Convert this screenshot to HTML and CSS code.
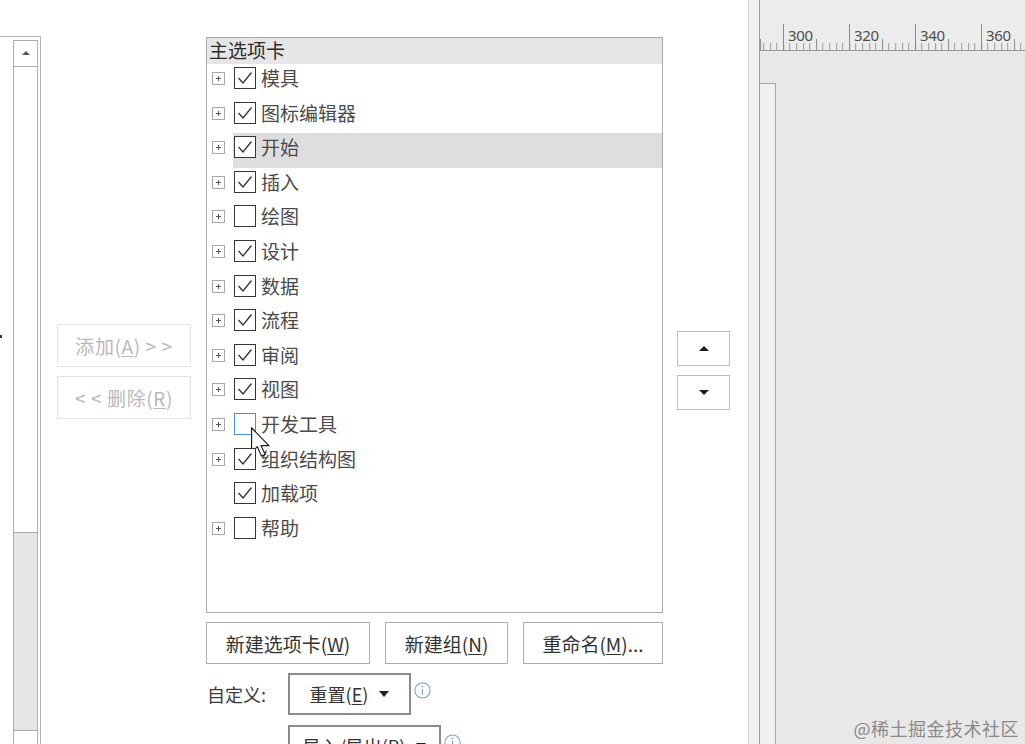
FILE: index.html
```html
<!DOCTYPE html>
<html lang="zh-CN">
<head>
<meta charset="utf-8">
<title>自定义功能区</title>
<link rel="stylesheet" href="styles.css">
</head>
<body>
<div class="screen">
  <div class="dialog">
    <div class="leftbox">
      <div class="lb-gutter"><span class="lb-dot"></span></div>
      <div class="vscroll">
        <div class="sb-up"><span class="tri-up-s"></span></div>
        <div class="sb-thumb"></div>
        <div class="sb-track"></div>
        <div class="sb-down"></div>
      </div>
    </div>

    <div class="midcol">
      <button class="btn-dis">添加(<u>A</u>) &gt; &gt;</button>
      <button class="btn-dis">&lt; &lt; 删除(<u>R</u>)</button>
    </div>

    <div class="treecol">
      <div class="tree">
        <div class="tree-head">主选项卡</div>
        <div class="row"><span class="exp"></span><div class="item"><span class="cb on"><svg viewBox="0 0 20 20"><polyline points="3.5,10 8,15 16.5,4.5"/></svg></span><span class="label">模具</span></div></div>
        <div class="row"><span class="exp"></span><div class="item"><span class="cb on"><svg viewBox="0 0 20 20"><polyline points="3.5,10 8,15 16.5,4.5"/></svg></span><span class="label">图标编辑器</span></div></div>
        <div class="row sel"><span class="exp"></span><div class="item"><span class="cb on"><svg viewBox="0 0 20 20"><polyline points="3.5,10 8,15 16.5,4.5"/></svg></span><span class="label">开始</span></div></div>
        <div class="row"><span class="exp"></span><div class="item"><span class="cb on"><svg viewBox="0 0 20 20"><polyline points="3.5,10 8,15 16.5,4.5"/></svg></span><span class="label">插入</span></div></div>
        <div class="row"><span class="exp"></span><div class="item"><span class="cb"></span><span class="label">绘图</span></div></div>
        <div class="row"><span class="exp"></span><div class="item"><span class="cb on"><svg viewBox="0 0 20 20"><polyline points="3.5,10 8,15 16.5,4.5"/></svg></span><span class="label">设计</span></div></div>
        <div class="row"><span class="exp"></span><div class="item"><span class="cb on"><svg viewBox="0 0 20 20"><polyline points="3.5,10 8,15 16.5,4.5"/></svg></span><span class="label">数据</span></div></div>
        <div class="row"><span class="exp"></span><div class="item"><span class="cb on"><svg viewBox="0 0 20 20"><polyline points="3.5,10 8,15 16.5,4.5"/></svg></span><span class="label">流程</span></div></div>
        <div class="row"><span class="exp"></span><div class="item"><span class="cb on"><svg viewBox="0 0 20 20"><polyline points="3.5,10 8,15 16.5,4.5"/></svg></span><span class="label">审阅</span></div></div>
        <div class="row"><span class="exp"></span><div class="item"><span class="cb on"><svg viewBox="0 0 20 20"><polyline points="3.5,10 8,15 16.5,4.5"/></svg></span><span class="label">视图</span></div></div>
        <div class="row"><span class="exp"></span><div class="item"><span class="cb hover"><svg class="cursor" viewBox="0 0 20 32"><path d="M1.5 1.5 L1.5 25 L7 19.5 L11 28.5 L14.5 27 L10.5 18.5 L18 18.5 Z"/></svg></span><span class="label">开发工具</span></div></div>
        <div class="row"><span class="exp"></span><div class="item"><span class="cb on"><svg viewBox="0 0 20 20"><polyline points="3.5,10 8,15 16.5,4.5"/></svg></span><span class="label">组织结构图</span></div></div>
        <div class="row"><span class="exp none"></span><div class="item"><span class="cb on"><svg viewBox="0 0 20 20"><polyline points="3.5,10 8,15 16.5,4.5"/></svg></span><span class="label">加载项</span></div></div>
        <div class="row"><span class="exp"></span><div class="item"><span class="cb"></span><span class="label">帮助</span></div></div>
      </div>

      <div class="btnrow">
        <button class="btn w1">新建选项卡(<u>W</u>)</button>
        <button class="btn w2">新建组(<u>N</u>)</button>
        <button class="btn w3">重命名(<u>M</u>)...</button>
      </div>

      <div class="custrow">
        <span class="cust-label">自定义:</span>
        <button class="dd w-reset"><span>重置(<u>E</u>)</span><span class="caret"></span></button>
        <svg class="info" viewBox="0 0 20 20"><circle cx="10" cy="10" r="8"/><line x1="10" y1="8.5" x2="10" y2="14.5"/><circle class="idot" cx="10" cy="5.8" r="0.9"/></svg>
      </div>
      <div class="custrow second">
        <span class="cust-label"></span>
        <button class="dd w-import"><span>导入/导出(<u>P</u>)</span><span class="caret"></span></button>
        <svg class="info" viewBox="0 0 20 20"><circle cx="10" cy="10" r="8"/><line x1="10" y1="8.5" x2="10" y2="14.5"/><circle class="idot" cx="10" cy="5.8" r="0.9"/></svg>
      </div>
    </div>

    <div class="updown">
      <button class="ud"><span class="tri-up"></span></button>
      <button class="ud"><span class="tri-down"></span></button>
    </div>
  </div>

  <div class="divider"></div>

  <div class="canvas">
    <div class="ruler">
      <div class="rc first"></div>
      <div class="rc"><span>300</span></div>
      <div class="rc"><span>320</span></div>
      <div class="rc"><span>340</span></div>
      <div class="rc"><span>360</span></div>
    </div>
    <div class="work">
      <div class="vstrip"></div>
    </div>
  </div>

  <div class="watermark">@稀土掘金技术社区</div>
</div>
</body>
</html>
```

FILE: styles.css
```css
* { box-sizing: border-box; }
html, body { margin: 0; padding: 0; }
body {
  width: 1025px;
  height: 744px;
  overflow: hidden;
  background: #fff;
  font-family: "Noto Sans CJK SC", "Noto Sans", sans-serif;
  color: #3c3c3c;
}
button { font: inherit; color: inherit; padding: 0; margin: 0; cursor: default; }
u { text-decoration: underline; text-underline-offset: 2px; text-decoration-thickness: 1px; }

.screen {
  position: relative;
  display: flex;
  width: 1025px;
  height: 744px;
  overflow: hidden;
}

/* ---------- dialog ---------- */
.dialog {
  width: 748px;
  height: 744px;
  flex: none;
  display: flex;
  align-items: flex-start;
  padding-top: 36px;
  background: #fff;
}

.leftbox {
  width: 41px;
  height: 720px;
  flex: none;
  display: flex;
  border-top: 1px solid #b3b3b3;
  border-right: 1px solid #b3b3b3;
}
.lb-gutter {
  width: 13px;
  flex: none;
  padding-top: 298px;
}
.lb-dot {
  display: block;
  width: 2px;
  height: 3px;
  background: #333;
}
.vscroll {
  width: 25px;
  flex: none;
  margin-top: 3px;
  display: flex;
  flex-direction: column;
  border: 1px solid #adadad;
  border-bottom: none;
}
.sb-up {
  height: 26px;
  border-bottom: 1px solid #adadad;
  display: flex;
  align-items: center;
  justify-content: center;
}
.tri-up-s {
  width: 0; height: 0;
  border-left: 4px solid transparent;
  border-right: 4px solid transparent;
  border-bottom: 4px solid #555;
}
.sb-thumb {
  height: 471px;
  background: #fff;
  border-bottom: 1px solid #ababab;
}
.sb-track {
  height: 200px;
  background: #e6e6e6;
}
.sb-down {
  height: 26px;
  border-top: 1px solid #adadad;
  background: #fff;
}

.midcol {
  width: 134px;
  flex: none;
  margin-left: 16px;
  padding-top: 288px;
  display: flex;
  flex-direction: column;
  gap: 9px;
}
.btn-dis {
  height: 43px;
  background: #fff;
  border: 1px solid #e3e3e3;
  color: #b9b9b9;
  font-size: 19px;
  letter-spacing: 0.6px;
}

/* ---------- tree ---------- */
.treecol {
  width: 457px;
  flex: none;
  margin-left: 15px;
  display: flex;
  flex-direction: column;
}
.tree {
  margin-top: 1px;
  height: 576px;
  border: 1px solid #a9a9a9;
  background: #fff;
  display: flex;
  flex-direction: column;
}
.tree-head {
  height: 26px;
  background: #e6e6e6;
  padding-left: 2px;
  font-size: 19px;
  line-height: 24px;
  color: #2c2c2c;
}
.row {
  height: 34.6px;
  flex: none;
  display: flex;
  align-items: flex-start;
  padding-left: 5px;
}
.exp {
  position: relative;
  width: 13px;
  height: 13px;
  flex: none;
  margin-top: 8px;
  border: 1px solid #a8a8a8;
  background: #fff;
}
.exp::before, .exp::after {
  content: "";
  position: absolute;
  background: #555;
}
.exp::before { left: 3px; top: 5px; width: 5px; height: 1px; }
.exp::after { left: 5px; top: 3px; width: 1px; height: 5px; }
.exp.none { border-color: transparent; background: transparent; }
.exp.none::before, .exp.none::after { display: none; }

.item {
  flex: 1;
  height: 100%;
  margin-left: 8px;
  padding-left: 1px;
  padding-top: 3px;
  display: flex;
  align-items: flex-start;
}
.row.sel .item { background: #dedede; }

.cb {
  position: relative;
  width: 22px;
  height: 22px;
  flex: none;
  border: 1px solid #363636;
  background: #fff;
  display: flex;
}
.cb svg { width: 20px; height: 20px; }
.cb polyline {
  fill: none;
  stroke: #333;
  stroke-width: 1.3;
  stroke-linejoin: miter;
}
.cb.hover { border-color: #4a90d9; }
.cb svg.cursor {
  position: absolute;
  left: 15px;
  top: 12px;
  width: 21px;
  height: 34px;
}
.cursor path {
  fill: #fff;
  stroke: #1a1a1a;
  stroke-width: 1.1;
  stroke-linejoin: round;
}
.label {
  margin-left: 5px;
  font-size: 19px;
  line-height: 22px;
  color: #4a4a4a;
  white-space: nowrap;
}

/* ---------- buttons below ---------- */
.btnrow {
  margin-top: 9px;
  display: flex;
  gap: 15px;
  height: 42px;
}
.btn {
  height: 42px;
  background: #fff;
  border: 1px solid #adadad;
  font-size: 19px;
  color: #333;
}
.w1 { width: 164px; }
.w2 { width: 123px; }
.w3 { width: 140px; }

.custrow {
  margin-top: 9px;
  display: flex;
  align-items: flex-start;
}
.custrow.second { margin-top: 10px; }
.cust-label {
  width: 82px;
  flex: none;
  height: 42px;
  line-height: 42px;
  padding-left: 1px;
  font-size: 18px;
  color: #3a3a3a;
}
.dd {
  height: 42px;
  flex: none;
  background: #fff;
  border: 2px solid #8a8a8a;
  font-size: 18px;
  color: #333;
  display: flex;
  align-items: center;
  justify-content: center;
  gap: 11px;
}
.w-reset { width: 123px; }
.w-import { width: 153px; }
.caret {
  width: 0; height: 0;
  border-left: 5px solid transparent;
  border-right: 5px solid transparent;
  border-top: 6px solid #222;
}
.info {
  width: 19px;
  height: 19px;
  flex: none;
  margin-left: 2px;
  margin-top: 8px;
}
.info circle { fill: none; stroke: #7d9cc6; stroke-width: 1.1; }
.info line { stroke: #7d9cc6; stroke-width: 1.2; }
.info .idot { fill: #7d9cc6; stroke: none; }

.updown {
  width: 53px;
  flex: none;
  margin-left: 14px;
  padding-top: 295px;
  display: flex;
  flex-direction: column;
  gap: 9px;
}
.ud {
  height: 35px;
  background: #fff;
  border: 1px solid #bdbdbd;
  display: flex;
  align-items: center;
  justify-content: center;
}
.tri-up {
  width: 0; height: 0;
  border-left: 5px solid transparent;
  border-right: 5px solid transparent;
  border-bottom: 5px solid #1e1e1e;
}
.tri-down {
  width: 0; height: 0;
  border-left: 5px solid transparent;
  border-right: 5px solid transparent;
  border-top: 5px solid #1e1e1e;
}

/* ---------- right side ---------- */
.divider {
  width: 12px;
  flex: none;
  height: 744px;
  background: #f1f1f1;
  border-left: 1px solid #d8d8d8;
  border-right: 1px solid #9c9c9c;
}
.canvas {
  flex: 1;
  height: 744px;
  background: #e8e8e8;
  display: flex;
  flex-direction: column;
}
.ruler {
  height: 51px;
  flex: none;
  padding-top: 24px;
  display: flex;
  background-color: #ececec;
  border-bottom: 1px solid #979797;
  background-image:
    repeating-linear-gradient(to right, #9a9a9a 0 1px, transparent 1px 6.6px),
    repeating-linear-gradient(to right, #8e8e8e 0 1px, transparent 1px 33px);
  background-size: 100% 7px, 100% 11px;
  background-position: 3.2px bottom, 23px bottom;
  background-repeat: repeat-x;
}
.rc {
  width: 66px;
  flex: none;
  height: 26px;
  border-left: 1px solid #8a8a8a;
  padding-left: 4px;
  padding-top: 3px;
  font-family: "Noto Sans", "Liberation Sans", sans-serif;
  font-size: 15px;
  line-height: 16px;
  letter-spacing: -0.3px;
  color: #4e4e4e;
}
.rc.first { width: 23px; border-left: none; padding: 0; }
.work {
  flex: 1;
  padding-top: 32px;
  display: flex;
}
.vstrip {
  width: 16px;
  height: 100%;
  background: #f0f0f0;
  border-top: 1px solid #a9a9a9;
  border-right: 1px solid #a9a9a9;
}

.watermark {
  position: absolute;
  right: 6px;
  bottom: 5px;
  font-size: 18px;
  line-height: 22px;
  color: #8a8a8a;
  letter-spacing: 0.5px;
}
```
